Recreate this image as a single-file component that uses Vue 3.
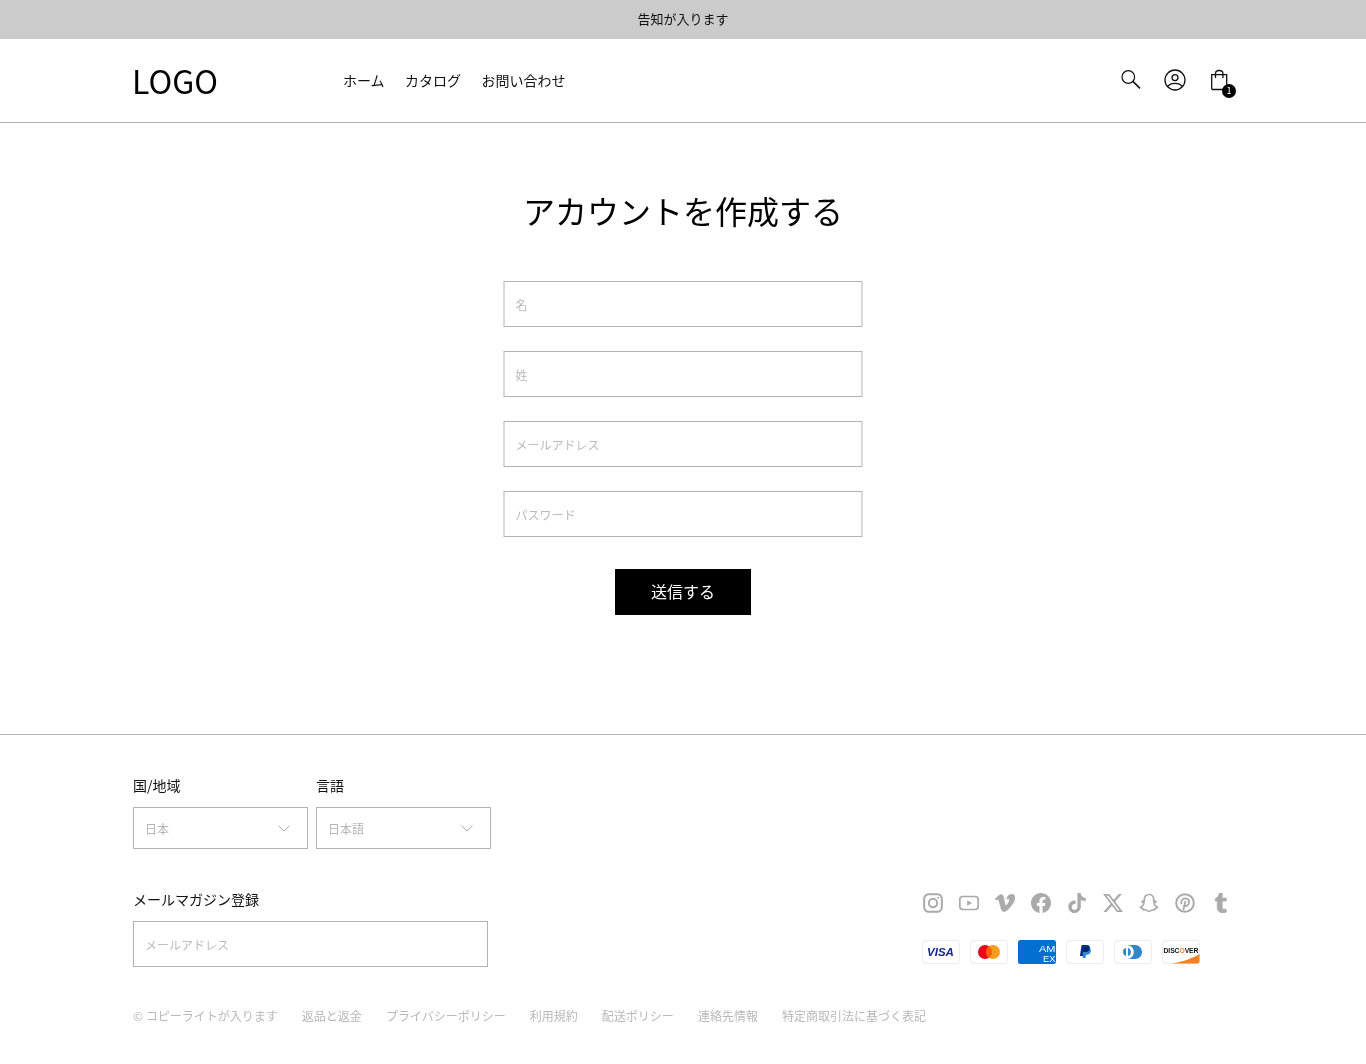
<script setup>
const fields = ['名', '姓', 'メールアドレス', 'パスワード']
const links = ['返品と返金', 'プライバシーポリシー', '利用規約', '配送ポリシー', '連絡先情報', '特定商取引法に基づく表記']
const selects = [
  { label: '国/地域', value: '日本' },
  { label: '言語', value: '日本語' }
]
</script>

<template>
  <div class="page">
    <div class="announce">告知が入ります</div>
    <header class="header">
      <div class="wrap header-in">
        <div class="logo">LOGO</div>
        <nav class="nav">
          <a>ホーム</a><a>カタログ</a><a>お問い合わせ</a>
        </nav>
        <div class="tools">
          <svg class="tool" viewBox="0 0 24 24" fill="none" stroke="#111" stroke-width="1.200">
            <circle cx="9.300" cy="9" r="6.300" />
            <path d="M13.900 13.400 21 20.400" stroke-width="1.500" />
          </svg>
          <svg class="tool" viewBox="0 0 24 24" fill="none" stroke="#111" stroke-width="1.300">
            <circle cx="12" cy="12" r="10" />
            <circle cx="12" cy="9.600" r="3" />
            <path d="M4.600 18.500c1.600-2.200 4.200-3.200 7.400-3.200s5.800 1 7.400 3.200" />
          </svg>
          <div class="bag">
            <svg class="tool" viewBox="0 0 24 24" fill="none" stroke="#111" stroke-width="1.300">
              <path d="M4.700 6.700h15v13.800a1 1 0 0 1-1 1H5.700a1 1 0 0 1-1-1z" />
              <path d="M8.500 10V5.500a3.700 3 0 0 1 7.400 0V10" />
            </svg>
            <span class="badge">1</span>
          </div>
        </div>
      </div>
    </header>

    <main class="main">
      <h1 class="title">アカウントを作成する</h1>
      <form class="form" @submit.prevent>
        <input v-for="f in fields" :key="f" class="field form-field" :placeholder="f" />
        <button class="submit" type="submit">送信する</button>
      </form>
    </main>

    <footer class="footer">
      <div class="wrap">
        <div class="selects">
          <div v-for="s in selects" :key="s.label" class="sel-col">
            <div class="label">{{ s.label }}</div>
            <div class="select">
              <span>{{ s.value }}</span>
              <svg width="12" height="7" viewBox="0 0 12 7" fill="none" stroke="#aaa" stroke-width="1"><path d="M.5.7 6 6l5.500-5.300" /></svg>
            </div>
          </div>
        </div>

        <div class="mid">
          <div class="news">
            <div class="label news-label">メールマガジン登録</div>
            <input class="field news-field" placeholder="メールアドレス" />
          </div>
          <div class="right">
            <div class="social">
              <svg viewBox="0 0 24 24" fill="none" stroke="#aaa" stroke-width="2.400">
                <rect x="1.400" y="1.400" width="21.200" height="21.200" rx="5.500" />
                <circle cx="12" cy="12" r="5" />
                <circle cx="18.300" cy="5.700" r="1.300" fill="#aaa" stroke="none" />
              </svg>
              <svg viewBox="0 0 24 24" fill="none" stroke="#aaa" stroke-width="2">
                <rect x="1" y="4.200" width="22" height="15.600" rx="3.500" />
                <path d="M9.800 8.600v6.800l5.800-3.400z" fill="#aaa" stroke="none" />
              </svg>
              <svg viewBox="0 0 24 24" fill="#aaa" stroke="#aaa" stroke-width=".6"><path d="M23.977 6.417c-.105 2.338-1.739 5.543-4.894 9.609-3.268 4.247-6.026 6.370-8.290 6.370-1.409 0-2.578-1.294-3.553-3.881l-1.918-7.114c-.719-2.584-1.488-3.878-2.312-3.878-.179 0-.806.378-1.881 1.132L0 7.197a315.065 315.065 0 0 0 3.501-3.128C5.080 2.701 6.266 1.984 7.055 1.910c1.867-.180 3.016 1.100 3.447 3.838.465 2.953.789 4.789.971 5.507.539 2.450 1.131 3.674 1.776 3.674.502 0 1.256-.796 2.265-2.385 1.004-1.589 1.540-2.797 1.612-3.628.144-1.371-.395-2.061-1.614-2.061-.574 0-1.167.121-1.777.391 1.186-3.868 3.434-5.757 6.762-5.637 2.473.060 3.628 1.664 3.493 4.797z" /></svg>
              <svg viewBox="0 0 24 24" fill="#aaa"><path d="M24 12.073c0-6.627-5.373-12-12-12s-12 5.373-12 12c0 5.990 4.388 10.954 10.125 11.854v-8.385H7.078v-3.470h3.047V9.430c0-3.007 1.792-4.669 4.533-4.669 1.312 0 2.686.235 2.686.235v2.953H15.830c-1.491 0-1.956.925-1.956 1.874v2.250h3.328l-.532 3.470h-2.796v8.385C19.612 23.027 24 18.062 24 12.073z" /></svg>
              <svg viewBox="0 0 24 24" fill="#aaa"><path d="M12.525.020c1.310-.020 2.610-.010 3.910-.020.080 1.530.630 3.090 1.750 4.170 1.120 1.110 2.700 1.620 4.240 1.790v4.030c-1.440-.050-2.890-.350-4.200-.970-.570-.260-1.100-.590-1.620-.930-.010 2.920.010 5.840-.020 8.750-.080 1.400-.540 2.790-1.350 3.940-1.310 1.920-3.580 3.170-5.910 3.210-1.430.080-2.860-.310-4.080-1.030-2.020-1.190-3.440-3.370-3.650-5.710-.020-.500-.030-1-.010-1.490.180-1.900 1.120-3.720 2.580-4.960 1.660-1.440 3.980-2.130 6.150-1.720.020 1.480-.040 2.960-.040 4.440-.990-.320-2.150-.230-3.020.370-.630.410-1.110 1.040-1.360 1.750-.210.510-.150 1.070-.140 1.610.240 1.640 1.820 3.020 3.500 2.870 1.120-.010 2.190-.660 2.770-1.610.190-.330.400-.670.410-1.060.100-1.790.060-3.570.070-5.360.010-4.030-.010-8.050.020-12.070z" /></svg>
              <svg viewBox="0 0 24 24" fill="#aaa"><path d="M18.901 1.153h3.680l-8.040 9.190L24 22.846h-7.406l-5.800-7.584-6.638 7.584H.474l8.600-9.830L0 1.154h7.594l5.243 6.932ZM17.610 20.644h2.039L6.486 3.240H4.298Z" /></svg>
              <svg viewBox="0 0 24 24" fill="none" stroke="#aaa" stroke-width="2" stroke-linejoin="round">
                <path d="M12 1.800c3.500 0 5.600 2.600 5.600 5.600v2.700l2-.5.900 1-2.500 1.700c.5 2.300 2 3.900 4.300 4.800-.4 1-1.600 1.300-3 1.500l-.5 1.600c-1.600-.2-2.900-.2-4 .6-1 .7-1.800 1.300-2.800 1.300s-1.800-.6-2.800-1.300c-1.100-.8-2.400-.8-4-.6l-.5-1.600c-1.400-.2-2.600-.5-3-1.500 2.300-.9 3.800-2.500 4.300-4.800l-2.500-1.700.9-1 2 .5V7.400c0-3 2.100-5.600 5.600-5.600z" />
              </svg>
              <svg viewBox="0 0 24 24" fill="none" stroke="#aaa" stroke-width="2.400">
                <circle cx="12" cy="12" r="10.600" />
                <path d="M10 20.500l2.600-11M7.900 13.500c-1.400-3.200.9-7 4.400-7 3.200 0 5.100 2.200 4.500 5.200-.6 2.700-2.700 4.400-4.500 3.700-.9-.3-1.300-1-1.500-1.700" stroke-width="2.200" />
              </svg>
              <svg viewBox="0 0 24 24" fill="#aaa" stroke="#aaa" stroke-width=".8"><path d="M14.563 24c-5.093 0-7.031-3.756-7.031-6.411V9.747H5.116V6.648c3.630-1.313 4.512-4.596 4.710-6.469C9.840.051 9.941 0 9.999 0h3.517v6.114h4.801v3.633h-4.820v7.470c.016 1.001.375 2.371 2.207 2.371h.090c.631-.020 1.486-.205 1.936-.419l1.156 3.425c-.436.636-2.400 1.374-4.156 1.404h-.178l.011.002z" /></svg>
            </div>
            <div class="pay">
              <svg viewBox="0 0 38 24">
                <rect x=".5" y=".5" width="37" height="23" rx="2.500" fill="#fff" stroke="#ededed" />
                <text x="18.500" y="16" text-anchor="middle" class="visa">VISA</text>
              </svg>
              <svg viewBox="0 0 38 24">
                <rect x=".5" y=".5" width="37" height="23" rx="2.500" fill="#fff" stroke="#ededed" />
                <circle cx="15" cy="12" r="7" fill="#eb001b" />
                <circle cx="23" cy="12" r="7" fill="#f79e1b" />
                <path d="M19 6.300a7 7 0 0 1 0 11.400a7 7 0 0 1 0-11.400z" fill="#ff5f00" />
              </svg>
              <svg viewBox="0 0 38 24">
                <rect width="38" height="24" rx="2.500" fill="#006fcf" />
                <text x="21" y="11.800" textLength="16.500" lengthAdjust="spacingAndGlyphs" class="amex">AM</text>
                <text x="25" y="21.800" textLength="12.500" lengthAdjust="spacingAndGlyphs" class="amex">EX</text>
              </svg>
              <svg viewBox="0 0 38 24">
                <rect x=".5" y=".5" width="37" height="23" rx="2.500" fill="#fff" stroke="#ededed" />
                <path fill="#003087" d="M23.900 8.300c.2-1 0-1.700-.6-2.300-.6-.7-1.700-1-3.100-1h-4.100c-.3 0-.5.2-.6.500L14 15.600c0 .2.1.4.3.4H17l.4-3.400 1.800-2.200 4.700-2.100z" />
                <path fill="#3086c8" d="M23.900 8.300l-.2.2c-.5 2.800-2.200 3.800-4.600 3.800H18c-.3 0-.5.2-.6.500l-.6 3.900-.2 1c0 .2.1.4.3.4H19c.3 0 .5-.2.5-.4v-.1l.4-2.400v-.1c0-.2.3-.4.500-.4h.3c2.100 0 3.700-.8 4.100-3.200.2-1 .1-1.800-.4-2.400-.1-.5-.3-.7-.5-.8z" />
                <path fill="#012169" d="M23.300 8.100c-.1-.1-.2-.1-.3-.1-.1 0-.2 0-.3-.1-.3-.1-.7-.1-1.100-.1h-3c-.1 0-.2 0-.2.1-.2.1-.3.2-.3.4l-.7 4.400v.1c0-.3.3-.5.6-.5h1.300c2.500 0 4.100-1 4.600-3.800v-.2c-.1-.1-.3-.2-.5-.2h-.1z" />
              </svg>
              <svg viewBox="0 0 38 24">
                <rect x=".5" y=".5" width="37" height="23" rx="2.500" fill="#fff" stroke="#ededed" />
                <path fill="#3086c8" d="M12 12v3.700c0 .3-.2.3-.5.2-1.900-.8-3-3.300-2.300-5.400.4-1.100 1.200-2 2.300-2.400.4-.2.5-.1.5.2V12zm2 0V8.300c0-.3 0-.3.3-.2 2.100.8 3.200 3.300 2.400 5.400-.4 1.100-1.200 2-2.300 2.400-.4.2-.4.1-.4-.2V12zm7.200-7H13c3.800 0 6.800 3.100 6.800 7s-3 7-6.800 7h8.200c3.800 0 6.800-3.100 6.800-7s-3-7-6.800-7z" />
              </svg>
              <svg viewBox="0 0 38 24">
                <rect x=".5" y=".5" width="37" height="23" rx="2.500" fill="#fff" stroke="#ededed" />
                <path d="M37.500 14V21a2.500 2.500 0 0 1-2.500 2.500H10C20 22 30 18.500 37.500 14z" fill="#f48120" />
                <text x="1.500" y="13.300" textLength="35" class="disc">DISC<tspan fill="#f48120">O</tspan>VER</text>
              </svg>
            </div>
          </div>
        </div>

        <div class="legal">
          <span>© コピーライトが入ります</span>
          <a v-for="l in links" :key="l">{{ l }}</a>
        </div>
      </div>
    </footer>
  </div>
</template>

<style>
html, body { margin: 0; background: #fff; }
</style>

<style scoped>
.page {
  font-family: "Noto Sans CJK JP", "Noto Sans", sans-serif;
  color: #111;
  min-height: 1064px;
  will-change: transform;
}
.wrap { width: 1100px; margin: 0 auto; }
.announce {
  height: 39px;
  line-height: 37px;
  background: #cbcbcb;
  text-align: center;
  font-size: 13px;
}
.header { height: 83px; border-bottom: 1px solid #b4b4b4; }
.header-in { display: flex; align-items: center; height: 83px; }
.logo { width: 211px; font-size: 32px; line-height: 1; color: #000; padding-bottom: 1px; margin-left: -1px; }
.nav { display: flex; gap: 20.500px; font-size: 14px; line-height: 20px; padding-bottom: 2px; }
.tools { margin-left: auto; margin-right: 2px; display: flex; gap: 20px; align-items: center; padding-bottom: 1px; }
.tool { display: block; width: 24px; height: 24px; }
.bag { position: relative; }
.badge {
  position: absolute;
  right: -5px;
  bottom: -6px;
  width: 14px;
  height: 14px;
  border-radius: 50%;
  background: #000;
  color: #fff;
  font-size: 9px;
  line-height: 14px;
  text-align: center;
}
.main { height: 611px; display: flex; flex-direction: column; align-items: center; }
.title {
  margin: 64px 0 48px;
  font-size: 32px;
  font-weight: 400;
  line-height: 46px;
  color: #000;
}
.form { display: flex; flex-direction: column; align-items: center; gap: 24px; }
.field {
  display: block;
  box-sizing: border-box;
  width: 360px;
  height: 46px;
  padding: 0 12px;
  border: 1px solid #b4b4b4;
  border-radius: 0;
  background: #fff;
  font: inherit;
  font-size: 12px;
  outline: none;
}
.form-field { width: 359px; margin-left: -1px; padding-left: 11px; transform: translateX(0.5px); }
.field::placeholder { color: #bbb; opacity: 1; }
.submit {
  box-sizing: border-box;
  width: 136px;
  height: 46px;
  margin-top: 8px;
  border: 0;
  background: #000;
  color: #fff;
  font: inherit;
  font-size: 16px;
  line-height: 44px;
  padding: 0 0 2px;
}
.footer { border-top: 1px solid #b4b4b4; padding-top: 40px; }
.selects { display: flex; gap: 8px; }
.sel-col { width: 175px; }
.label { font-size: 14px; line-height: 20px; margin-bottom: 12px; }
.select {
  box-sizing: border-box;
  height: 42px;
  padding: 0 17px 0 11px;
  border: 1px solid #b4b4b4;
  display: flex;
  align-items: center;
  justify-content: space-between;
  font-size: 12px;
  color: #b4b4b4;
}
.mid { display: flex; justify-content: space-between; margin-top: 40px; }
.news-label { margin-bottom: 12px; }
.news-field { width: 355px; padding: 0 11px; }
.right { width: 310px; padding-top: 4px; }
.social { display: flex; gap: 16px; }
.social svg { width: 20px; height: 20px; display: block; flex: none; }
.pay { display: flex; gap: 10px; margin: 27px 0 0 -1px; }
.pay svg { width: 38px; height: 24px; display: block; flex: none; }
.visa { font: italic 700 11.500px "Liberation Sans", sans-serif; fill: #142688; }
.amex { font: 400 8.500px "Liberation Sans", sans-serif; fill: #fff; }
.disc { font: 700 6.800px "Liberation Sans", sans-serif; fill: #111; }
.legal {
  display: flex;
  gap: 24.100px;
  margin-top: 39px;
  font-size: 12px;
  line-height: 20px;
  color: #b8b8b8;
}
</style>
